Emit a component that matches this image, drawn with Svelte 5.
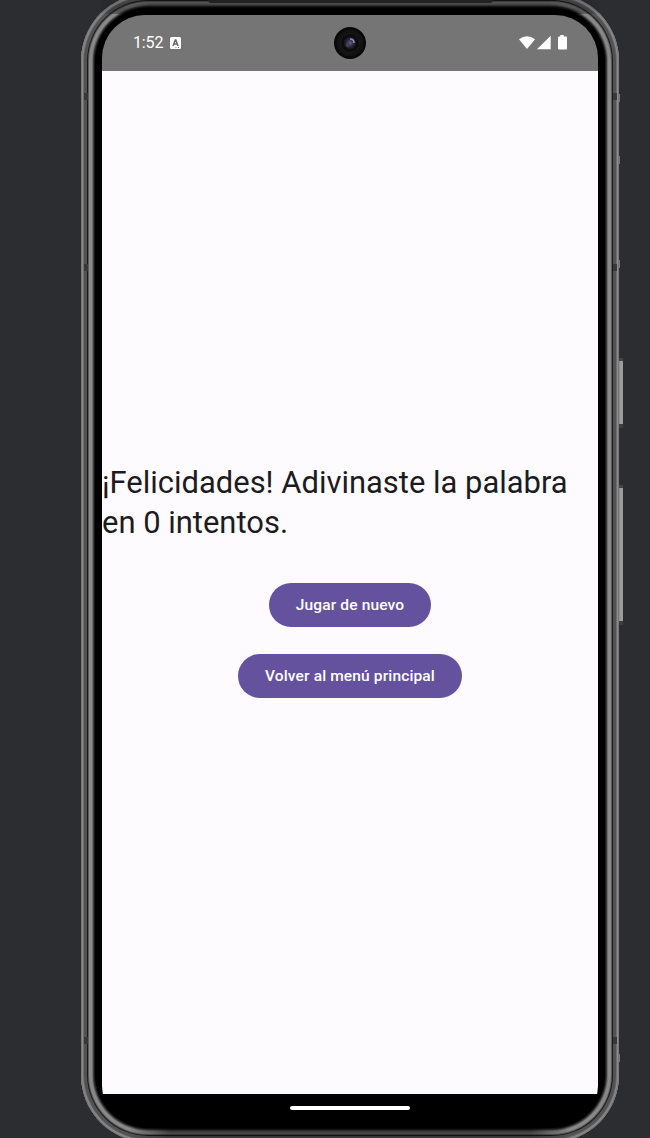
<script>
  const bands = [[96, 'l'], [267, 'l'], [1040, 'l'], [96, 'r'], [267, 'r'], [1040, 'r']];
  const nubs = [98, 160, 264, 1058];
</script>

<main>
  <div class="phone">
    <div class="screen">
      <header>
        <span class="time">1:52</span>
        <svg class="app" width="11" height="12" viewBox="0 0 11 12"><rect width="11" height="12" rx="1.5" fill="#fff" /><path d="M3 9 5.3 3h.5L8 9M3.8 7h3.5" fill="none" stroke="#666" stroke-width="1.5" /><path d="M5.5 10.5h1M8 10.5h1" stroke="#747474" /></svg>
        <svg class="status" width="50" height="16" viewBox="0 0 50 16">
          <path d="M1 4.2Q9 -1.8 17 4.2L9 14Z" fill="#fff" />
          <path d="M19 14.2 32.7 .7V14.2Z" fill="#fff" />
          <path d="M42.3 0h3.4v1.5H48q1 0 1 1v11q0 1-1 1h-7q-1 0-1-1v-11q0-1 1-1h1.3Z" fill="#fff" />
        </svg>
      </header>
      <section>
        <p>¡Felicidades! Adivinaste la palabra en 0 intentos.</p>
        <button>Jugar de nuevo</button>
        <button>Volver al menú principal</button>
      </section>
      <footer><span></span></footer>
    </div>
  </div>
  <i class="shade top"></i>
  <i class="shade bottom"></i>
  <svg class="camera" width="32" height="32" viewBox="0 0 32 32">
    <defs><radialGradient id="lens"><stop offset="0" stop-color="#65638b" /><stop offset=".5" stop-color="#302d43" /><stop offset="1" stop-color="#101015" /></radialGradient></defs>
    <circle cx="16" cy="16" r="16" fill="#080808" /><circle cx="16" cy="16" r="13.5" fill="#121212" /><circle cx="16" cy="16" r="9.5" fill="#0c0c0c" stroke="#1b1b1b" />
    <circle cx="16" cy="16" r="6.5" fill="url(#lens)" />
    <path d="M16 12q4 0 4 4" fill="none" stroke="#a181b5" stroke-width="1.7" /><circle cx="14" cy="18" r="2" fill="#384955" />
  </svg>
  {#each bands as [y, side]}<i class="band {side}" style="top:{y - 3}px"></i>{/each}
  {#each nubs as y}<i class="nub" style="top:{y - 4}px"></i>{/each}
  <i class="key power"></i>
  <i class="key volume"></i>
  <i class="slot"></i>
</main>

<style>
  :global(body) { background: #2c2d31; }
  main { position: relative; width: 650px; height: 1138px; overflow: hidden; background: #2c2d31; font-family: Roboto, sans-serif; }
  .phone {
    box-sizing: border-box; width: 538px; height: 1148px; margin: -6px 0 0 81px; padding: 21px 21px 20px;
    border-radius: 67px; background: #000;
    box-shadow: inset 0 0 0 1px #777, inset 0 0 0 2px #8c8c8c, inset 0 0 0 3px #6c6c6c, inset 0 0 0 6px #525252,
      inset 0 0 0 7px #1b1b1b, inset 0 0 0 8px #5c5c5c, inset 0 0 0 11px #898989, inset 0 0 0 12px #6c6c6c, inset 0 0 0 13px #3b3b3b, inset 0 0 0 14px #191919;
  }
  .screen { display: flex; flex-direction: column; width: 496px; height: 1107px; border-radius: 43px 43px 36px 36px; overflow: hidden; background: #000; }
  header { flex: none; box-sizing: border-box; height: 56px; padding: 0 30px 0 31px; display: flex; align-items: center; background: #757575; color: #fff; }
  .time { font-size: 16px; line-height: 18px; letter-spacing: -.15px; }
  .app { margin-left: 7px; }
  .status { margin-left: auto; }
  section { flex: 1; display: flex; flex-direction: column; align-items: center; padding-top: 392px; background: #fefbff; }
  p { width: 496px; margin: 0 0 40px; font-size: 30.95px; line-height: 40px; color: #1c1b1f; }
  button { height: 44px; margin: 0 0 27px; padding: 0 26.8px; border: 0; border-radius: 22px; background: #65529f; color: #fff; font: 500 15.5px/20px Roboto, sans-serif; letter-spacing: .14px; }
  footer { flex: none; height: 28px; display: flex; justify-content: center; align-items: center; background: #000; }
  footer span { width: 120px; height: 4px; border-radius: 2px; background: #fff; }
  .shade { position: absolute; left: 100px; width: 500px; }
  .top {
    top: 0; height: 14px; background: linear-gradient(rgba(0,0,0,.25), rgba(0,0,0,.65) 7px, #000 11px);
    mask-image: linear-gradient(90deg, transparent, #000 50px, #000 450px, transparent);
  }
  .bottom {
    left: 130px; width: 440px; top: 1126px; height: 12px; background: linear-gradient(#000, rgba(0,0,0,.65) 4px, rgba(0,0,0,.35) 10px, rgba(0,0,0,.25));
    mask-image: linear-gradient(90deg, transparent, #000 40px, #000 400px, transparent);
  }
  .camera { position: absolute; left: 334px; top: 27px; }
  .band { position: absolute; width: 4px; height: 7px; background: #383838; }
  .l { left: 84px; }
  .r { left: 613px; }
  .nub { position: absolute; left: 619px; width: 1px; height: 8px; background: #777; }
  .key { position: absolute; left: 619px; width: 4px; box-sizing: border-box; background: linear-gradient(90deg, #858585, #a3a3a3 50%, #969696); border-top: 3px solid #444; border-bottom: 4px solid #3d3d3d; }
  .power { top: 358px; height: 70px; }
  .volume { top: 485px; height: 140px; }
  .slot { position: absolute; left: 208px; top: 0; width: 285px; height: 3px; background: #222; border-radius: 0 0 3px 3px; }
</style>
